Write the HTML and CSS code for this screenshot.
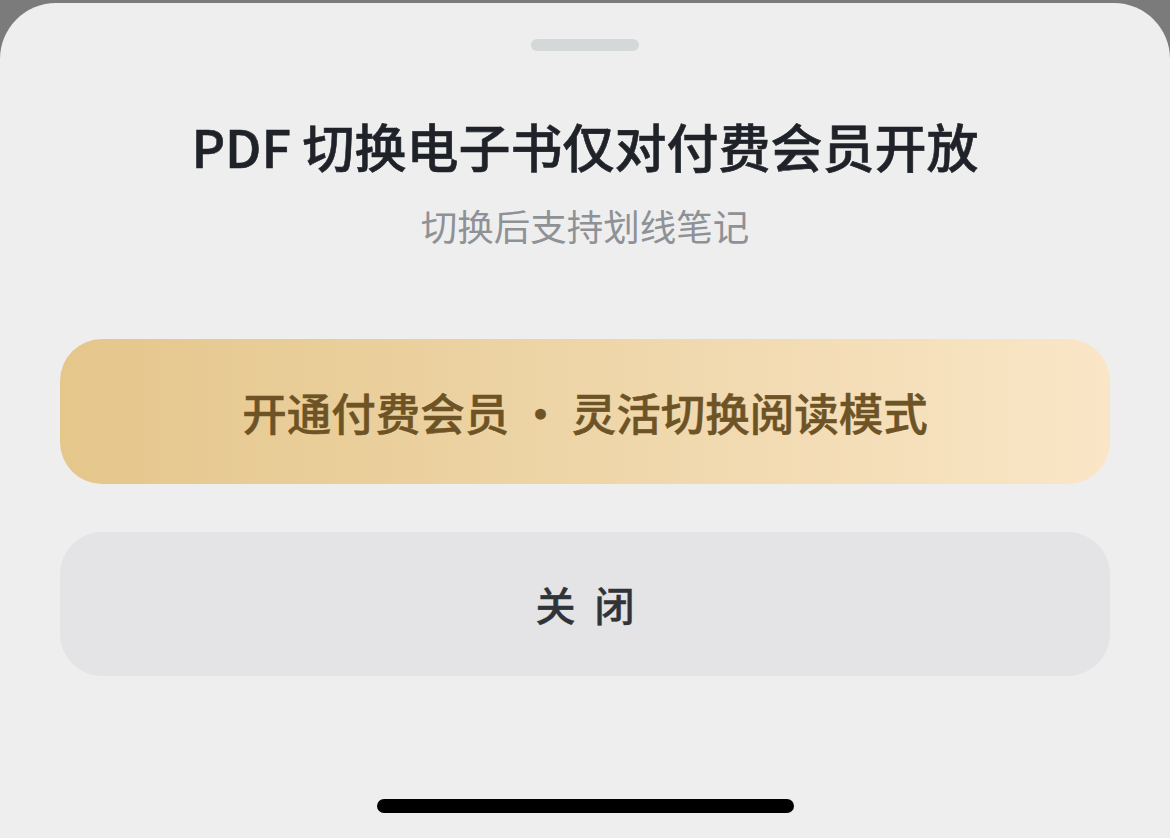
FILE: index.html
```html
<!DOCTYPE html>
<html lang="zh-CN">
<head>
  <meta charset="UTF-8">
  <title>PDF 切换电子书</title>
  <link rel="stylesheet" href="styles.css">
</head>
<body>

<div class="sheet">
  <div class="grabber"></div>

  <h1 class="title">PDF 切换电子书仅对付费会员开放</h1>
  <p class="subtitle">切换后支持划线笔记</p>

  <div class="actions">
    <button class="btn btn-gold">开通付费会员<span class="dot"> · </span>灵活切换阅读模式</button>
    <button class="btn btn-close">关 闭</button>
  </div>

  <div class="home-indicator"></div>
</div>

</body>
</html>
```

FILE: styles.css
```css
body {
  margin: 0;
  height: 838px;
  background: #7b7b7b;
  font-family: "Noto Sans CJK SC", "Noto Sans", sans-serif;
  overflow: hidden;
}

.sheet {
  margin-top: 3px;
  height: 835px;
  box-sizing: border-box;
  background: #eeeeee;
  border-radius: 56px 56px 0 0;
  display: flex;
  flex-direction: column;
  align-items: center;
  padding-top: 36px;
}

.grabber {
  width: 108px;
  height: 12px;
  border-radius: 6px;
  background: #d5d8d8;
}

.title {
  margin: 62px 0 0;
  font-size: 52px;
  line-height: 66px;
  font-weight: 500;
  color: #1f2329;
  -webkit-text-stroke: 0.6px #1f2329;
}

.subtitle {
  margin: 23px 0 0;
  font-size: 36.5px;
  line-height: 48px;
  color: #8e9196;
}

.actions {
  align-self: stretch;
  display: flex;
  flex-direction: column;
  gap: 48px;
  padding: 0 60px;
  margin-top: 89px;
}

.btn {
  height: 145px;
  border: none;
  border-radius: 42px;
  font-family: inherit;
  font-weight: 500;
  padding: 0;
}

.btn-gold {
  background: linear-gradient(90deg, #e5c68b 0%, #edd4a5 45%, #fae6c7 100%);
  color: #6d5325;
  font-size: 44.5px;
  -webkit-text-stroke: 0.5px #6d5325;
}

.btn-gold .dot {
  margin: 0 -1px;
}

.btn-close {
  height: 144px;
  background: #e4e4e6;
  color: #303338;
  font-size: 40px;
  letter-spacing: 5px;
  text-indent: 5px;
  -webkit-text-stroke: 0.4px #303338;
}

.home-indicator {
  margin-top: auto;
  margin-bottom: 25px;
  width: 417px;
  height: 14px;
  border-radius: 7px;
  background: #000;
}
```
